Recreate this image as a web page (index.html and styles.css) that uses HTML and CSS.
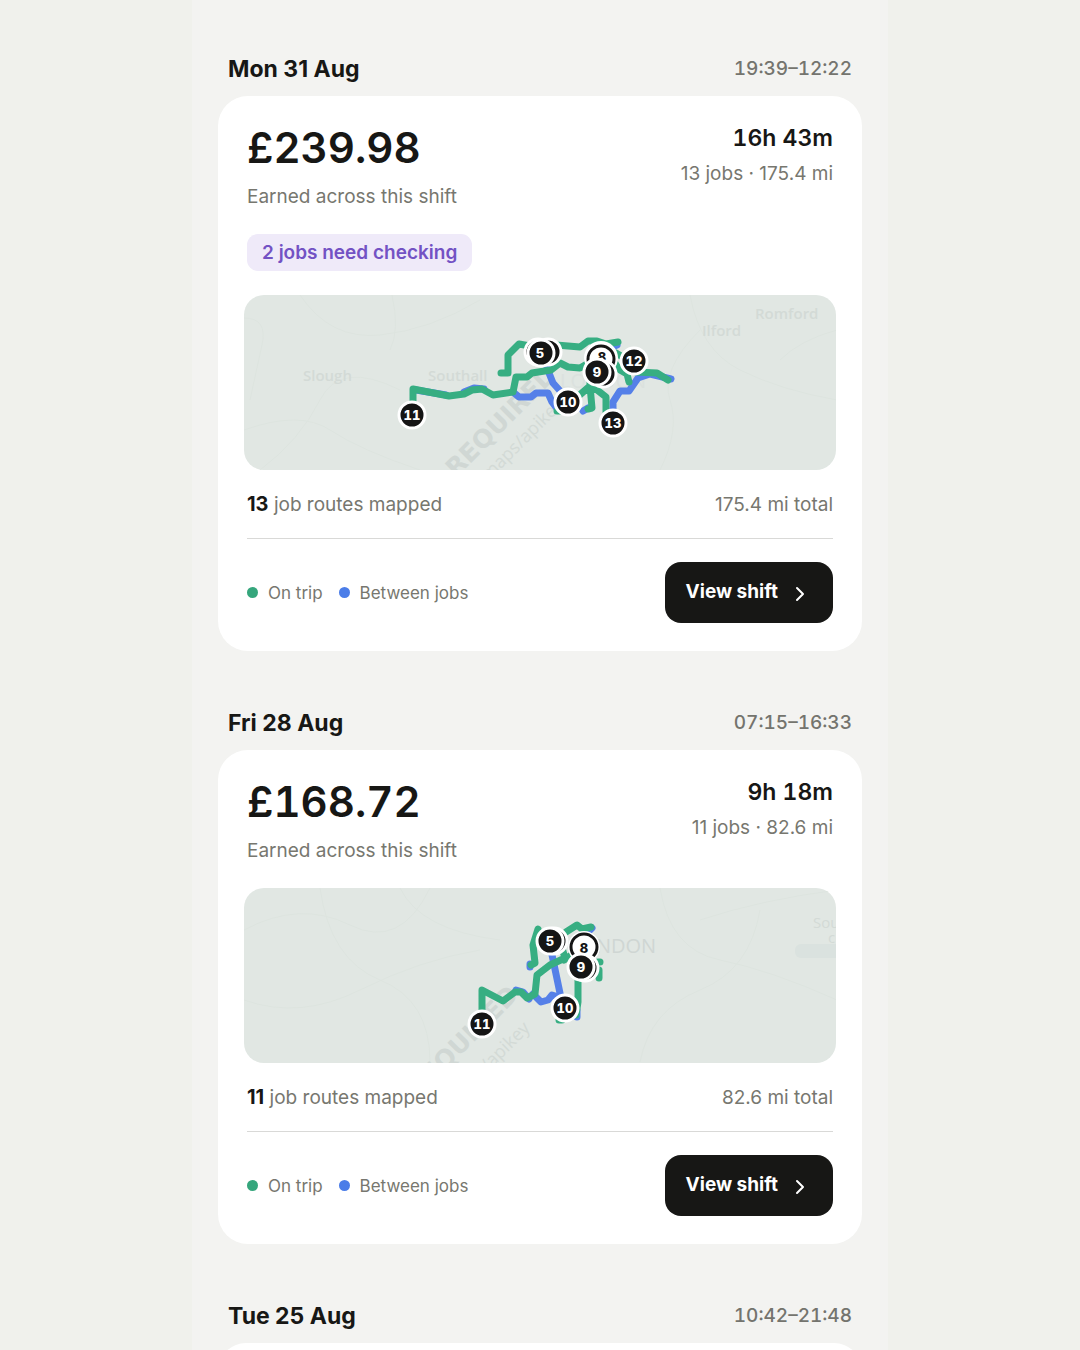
FILE: index.html
```html
<!DOCTYPE html>
<html lang="en">
<head>
<meta charset="utf-8">
<meta name="viewport" content="width=device-width, initial-scale=1">
<title>Shifts</title>
<link rel="stylesheet" href="styles.css">
</head>
<body>
<main class="shifts">
  <section class="shift">
    <header class="shift-head">
      <h2 class="shift-date">Mon 31 Aug</h2>
      <span class="shift-time">19:39–12:22</span>
    </header>
    <article class="card">
      <div class="summary">
        <div>
          <p class="amount">£239.98</p>
          <p class="caption">Earned across this shift</p>
        </div>
        <div class="totals">
          <p class="duration">16h 43m</p>
          <p class="jobs">13 jobs · 175.4 mi</p>
        </div>
      </div>
      <p class="badge">2 jobs need checking</p>
      <svg class="map" viewBox="244 295 592 175" preserveAspectRatio="xMidYMid slice" role="img" aria-label="Map of 13 job routes">
        <g class="roads">
          <path d="M244 318Q268 318 262 345T250 400M300 295Q330 340 380 335T480 300M244 430Q300 410 330 430T420 470M392 295Q400 330 390 350M690 295Q700 350 740 370T837 400M660 470Q680 430 670 400T700 330M780 360Q800 340 837 330M260 470Q300 440 320 400T400 390"/>
        </g>
        <g class="places">
          <text x="303" y="381">Slough</text>
          <text x="428" y="381">Southall</text>
          <text x="702" y="336">Ilford</text>
          <text x="755" y="319">Romford</text>
        </g>
        <text class="city" x="560" y="388">LONDON</text>
        <text class="mark" transform="translate(456 478) rotate(-45)">REQUIRED</text>
        <text class="mark-url" transform="translate(484 486) rotate(-45)">/maps/apikey</text>
        <g class="between">
          <path d="M416 390 446 395M464 392 474 388 484 389M513 392 519 397H531L536 393H548L552 402 558 410M547 368 553 383 562 393M583 411 588 408M605 350 617 345M612 348V355M613 412V402L620 391H629L638 378 650 374 671 379"/>
        </g>
        <g class="trip">
          <path d="M413 405V389L449 396 464 394 472 390 482 389 493 395 513 392 516 377H527L532 373 551 370 560 363 568 367 580 368 592 361"/>
          <path d="M501 373H508V355L519 344 530 346M556 345 580 347 588 341H597L606 344 618 342M616 353 621 356M614 362 620 370 627 374 629 382M636 372 657 373 668 380M575 399 590 386 592 408 588 409M592 386 606 397V412M557 411H560M590 362V386"/>
        </g>
        <g class="markers">
          <circle cx="538" cy="352" r="13"/>
          <circle cx="548" cy="352" r="13"/>
          <circle cx="541" cy="353" r="13"/>
          <circle cx="634" cy="361" r="13"/>
          <circle cx="568" cy="402" r="13"/>
          <circle cx="412" cy="415" r="13"/>
          <circle cx="613" cy="423" r="13"/>
          <circle class="halo" cx="601" cy="358" r="17"/>
          <circle class="ring" cx="601" cy="359" r="13"/>
        </g>
        <text class="num dark" x="602" y="362">8</text>
        <g class="markers">
          <circle cx="603" cy="374" r="13"/>
          <circle cx="597" cy="372" r="13"/>
        </g>
        <g class="num">
          <text x="540" y="358">5</text>
          <text x="597" y="377">9</text>
          <text x="568" y="407">10</text>
          <text x="412" y="420">11</text>
          <text x="634" y="366">12</text>
          <text x="613" y="428">13</text>
        </g>
      </svg>
      <div class="stats">
        <span><strong>13</strong> job routes mapped</span>
        <span>175.4 mi total</span>
      </div>
      <footer class="actions">
        <ul class="legend">
          <li class="key-trip">On trip</li>
          <li class="key-between">Between jobs</li>
        </ul>
        <button class="view" type="button">View shift
          <svg class="chevron" viewBox="0 0 16 16" aria-hidden="true"><path d="M5 2 11 8 5 14"/></svg>
        </button>
      </footer>
    </article>
  </section>

  <section class="shift">
    <header class="shift-head">
      <h2 class="shift-date">Fri 28 Aug</h2>
      <span class="shift-time">07:15–16:33</span>
    </header>
    <article class="card">
      <div class="summary">
        <div>
          <p class="amount">£168.72</p>
          <p class="caption">Earned across this shift</p>
        </div>
        <div class="totals">
          <p class="duration">9h 18m</p>
          <p class="jobs">11 jobs · 82.6 mi</p>
        </div>
      </div>
      <svg class="map" viewBox="244 888 592 175" preserveAspectRatio="xMidYMid slice" role="img" aria-label="Map of 11 job routes">
        <g class="roads">
          <path d="M244 930Q300 900 350 925T430 888M320 888Q330 960 380 980T430 1062M244 1000Q300 1020 360 990T480 950M400 888Q420 930 500 940M660 888Q670 950 720 960T837 1000M640 1062Q650 1010 700 990T760 910M700 920Q760 900 837 890"/>
        </g>
        <rect class="water" x="795" y="944" width="60" height="14" rx="6"/>
        <g class="places light">
          <text x="813" y="928">Southend</text>
          <text x="828" y="943">c</text>
        </g>
        <text class="city strong" x="570" y="953">LONDON</text>
        <text class="mark" transform="translate(418 1098) rotate(-45)">REQUIRED</text>
        <text class="mark-url" transform="translate(488 1072) rotate(-45)">/apikey</text>
        <g class="between">
          <path d="M516 990 523 992 529 999M533 994 541 1002 548 1000 552 995 562 998M551 950 561 998M530 967V964M587 933 592 928M577 1010V1017"/>
        </g>
        <g class="trip">
          <path d="M482 1015V990L503 1001 515 992H521L527 998 535 994 537 975 550 965 565 958 562 948"/>
          <path d="M531 965 535 963 533 945 538 929M566 932 577 925 582 929 591 927M598 962H600M599 970V978M578 980V1002L576 1015M559 1020H562M564 960 576 952"/>
        </g>
        <g class="markers">
          <circle cx="554" cy="941" r="13"/>
          <circle cx="550" cy="941" r="13"/>
          <circle cx="565" cy="1008" r="13"/>
          <circle cx="482" cy="1024" r="13"/>
          <circle class="halo" cx="584" cy="947" r="16"/>
          <circle class="ring" cx="584" cy="947" r="13"/>
        </g>
        <text class="num dark" x="584" y="953">8</text>
        <g class="markers">
          <circle cx="585" cy="968" r="13"/>
          <circle cx="581" cy="967" r="13"/>
        </g>
        <g class="num">
          <text x="550" y="946">5</text>
          <text x="581" y="972">9</text>
          <text x="565" y="1013">10</text>
          <text x="482" y="1029">11</text>
        </g>
      </svg>
      <div class="stats">
        <span><strong>11</strong> job routes mapped</span>
        <span>82.6 mi total</span>
      </div>
      <footer class="actions">
        <ul class="legend">
          <li class="key-trip">On trip</li>
          <li class="key-between">Between jobs</li>
        </ul>
        <button class="view" type="button">View shift
          <svg class="chevron" viewBox="0 0 16 16" aria-hidden="true"><path d="M5 2 11 8 5 14"/></svg>
        </button>
      </footer>
    </article>
  </section>

  <section class="shift">
    <header class="shift-head">
      <h2 class="shift-date">Tue 25 Aug</h2>
      <span class="shift-time">10:42–21:48</span>
    </header>
    <article class="card"></article>
  </section>
</main>
</body>
</html>
```
FILE: styles.css
```css
* {
  box-sizing: border-box;
}

body {
  margin: 0;
  height: 100vh;
  overflow: hidden;
  background: #f0f1ec;
  color: #171715;
  font-family: Inter, "Liberation Sans", sans-serif;
}

h2, p, ul {
  margin: 0;
  padding: 0;
}

.shifts {
  display: flex;
  flex-direction: column;
  gap: 58px;
  max-width: 696px;
  min-height: 100vh;
  margin: 0 auto;
  padding: 55px 26px;
  background: #f3f3f1;
}

.shift {
  display: flex;
  flex-direction: column;
  gap: 13px;
}

.shift-head {
  display: flex;
  justify-content: space-between;
  align-items: center;
  padding: 0 10px;
  line-height: 28px;
}

.shift-date {
  font-size: 23px;
  font-weight: 700;
}

.shift-time {
  color: #74746e;
  font-size: 19px;
  font-weight: 500;
  font-variant-numeric: tabular-nums;
}

.card {
  display: flex;
  flex-direction: column;
  padding: 28px 29px;
  border-radius: 30px;
  background: #fff;
}

.summary {
  display: flex;
  justify-content: space-between;
  margin-bottom: 25px;
}

.amount {
  font-size: 42px;
  font-weight: 600;
  font-variant-numeric: tabular-nums;
  line-height: 48px;
}

.caption {
  margin-top: 13px;
  color: #77776f;
  font-size: 19px;
  line-height: 24px;
}

.totals {
  text-align: right;
}

.duration {
  font-size: 23px;
  font-weight: 600;
  font-variant-numeric: tabular-nums;
  line-height: 28px;
}

.jobs {
  margin-top: 10px;
  color: #77776f;
  font-size: 19px;
  line-height: 24px;
}

.badge {
  align-self: flex-start;
  margin-bottom: 24px;
  padding: 0 15px;
  border-radius: 11px;
  background: #efeaf9;
  color: #7352c4;
  font-size: 19px;
  font-weight: 600;
  line-height: 37px;
}

.map {
  display: block;
  align-self: stretch;
  height: 175px;
  margin: 0 -3px;
  border-radius: 20px;
  background: #e1e7e3;
}

.roads {
  fill: none;
  stroke: #dde4df;
  stroke-width: 1;
}

.water {
  fill: #dae2df;
}

.places {
  fill: #d3dad6;
  font: 600 15px "Open Sans", sans-serif;
}

.light {
  font-weight: 400;
}

.city {
  fill: #dbe1de;
  font: 400 20px "Open Sans", sans-serif;
}

.strong {
  fill: #cfd6d3;
}

.mark {
  fill: #d0d7d4;
  font: 700 25px "DejaVu Sans", sans-serif;
}

.mark-url {
  fill: #d3dad6;
  font: 400 18px "Open Sans", sans-serif;
}

.trip,
.between {
  fill: none;
  stroke-width: 7;
  stroke-linecap: round;
  stroke-linejoin: round;
}

.trip {
  stroke: #37ae82;
}

.between {
  stroke: #5580e8;
}

.markers {
  fill: #151515;
  stroke: #fff;
  stroke-width: 3;
}

.markers .halo {
  fill: #fff;
  stroke: none;
}

.markers .ring {
  fill: #fff;
  stroke: #151515;
  stroke-width: 3;
}

.num {
  fill: #fff;
  font: 800 13px Inter, sans-serif;
  font-variant-numeric: tabular-nums;
  text-anchor: middle;
}

.dark {
  fill: #151515;
}

.stats {
  display: flex;
  justify-content: space-between;
  align-items: center;
  height: 69px;
  border-bottom: 1px solid #d9d9d7;
  color: #77776f;
  font-size: 19px;
}

.stats strong {
  color: #171715;
  font-size: 20px;
  font-weight: 700;
}

.actions {
  display: flex;
  justify-content: space-between;
  align-items: center;
  margin-top: 23px;
}

.legend {
  display: flex;
  gap: 16px;
  list-style: none;
  color: #77776f;
  font-size: 17px;
}

.legend li {
  display: flex;
  align-items: center;
  gap: 10px;
}

.legend li::before {
  content: "";
  width: 11px;
  height: 11px;
  border-radius: 50%;
}

.key-trip::before {
  background: #35a67c;
}

.key-between::before {
  background: #4b7de8;
}

.view {
  display: flex;
  align-items: center;
  gap: 14px;
  height: 61px;
  padding: 0 25px 2px 21px;
  border: 0;
  border-radius: 16px;
  background: #171715;
  color: #fff;
  font: 700 19px Inter, "Liberation Sans", sans-serif;
}

.chevron {
  width: 16px;
  height: 16px;
  margin-top: 4px;
  fill: none;
  stroke: #fff;
  stroke-width: 2;
  stroke-linecap: round;
  stroke-linejoin: round;
}
```
